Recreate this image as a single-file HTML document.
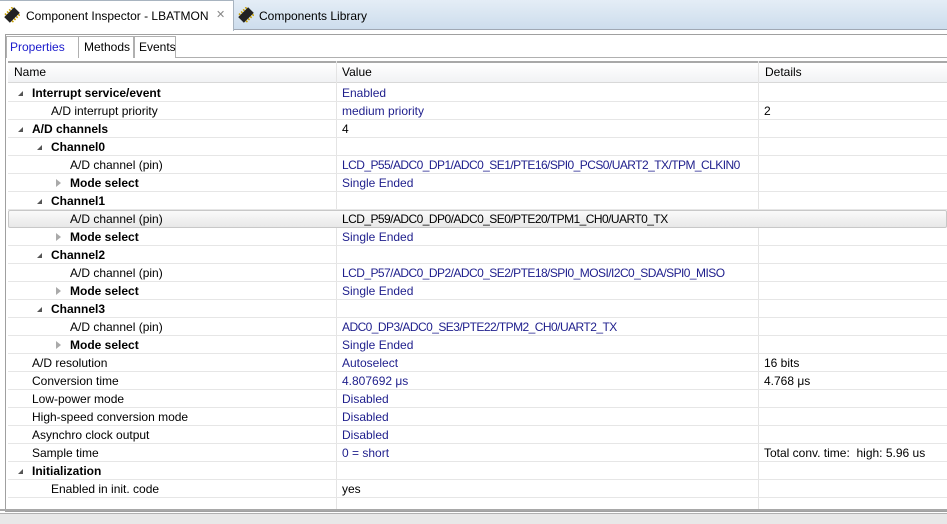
<!DOCTYPE html>
<html><head><meta charset="utf-8"><style>
*{margin:0;padding:0;box-sizing:border-box}
body{width:947px;height:524px;overflow:hidden;background:#fff;font-family:"Liberation Sans",Arial,sans-serif;font-size:12px;color:#000;position:relative}
.topbar{position:absolute;left:0;top:0;width:947px;height:30px;background:linear-gradient(#e4edf6,#cddded);border-bottom:1px solid #a0a8b4}
.tab1{position:absolute;left:0;top:0;width:234px;height:31px;background:#fff;border-right:1px solid #a8b4c0;border-top:1px solid #a8b4c0}
.t{position:absolute;white-space:nowrap}
.panel{position:absolute;left:5px;top:34px;width:942px;height:478px;border:1px solid #a0a0a0;border-right:none}
.itab{position:absolute;top:36px;height:22px;border:1px solid #b0b0b0;border-bottom:none;background:#fff}
.hdr{position:absolute;left:8px;top:61px;width:939px;height:22px;background:linear-gradient(#fff,#f1f2f4);border-top:2px solid #a8a8a8;border-bottom:1px solid #d8d8d8}
.row{position:absolute;left:8px;width:939px;height:18px;border-bottom:1px solid #e6e6e6}
.vl{position:absolute;top:61px;width:1px;height:448px;background:#e4e4e4}
.v{color:#1e1e8c}
.p{letter-spacing:-0.55px}
.b{font-weight:bold}
.tri{position:absolute;width:0;height:0;border-left:5px solid transparent;border-bottom:5px solid #555;top:7px}
.tro{position:absolute;width:0;height:0;border-top:4px solid transparent;border-bottom:4px solid transparent;border-left:5px solid #aaa;top:5px}
</style></head><body>
<div class="topbar"></div>
<div class="tab1"></div>
<svg style="position:absolute;left:4px;top:7px" width="16" height="16"><g transform="rotate(45 8 8)"><rect x="4" y="1" width="8" height="14" fill="#222"/><g stroke="#c8a000" stroke-width="1.5"><line x1="2" y1="3" x2="4" y2="3"/><line x1="2" y1="6" x2="4" y2="6"/><line x1="2" y1="9" x2="4" y2="9"/><line x1="2" y1="12" x2="4" y2="12"/><line x1="12" y1="3" x2="14" y2="3"/><line x1="12" y1="6" x2="14" y2="6"/><line x1="12" y1="9" x2="14" y2="9"/><line x1="12" y1="12" x2="14" y2="12"/></g></g></svg>
<div class="t" style="left:26px;top:9px">Component Inspector - LBATMON</div>
<div class="t" style="left:216px;top:8px;color:#888;font-size:11px">✕</div>
<svg style="position:absolute;left:238px;top:7px" width="16" height="16"><g transform="rotate(45 8 8)"><rect x="4" y="1" width="8" height="14" fill="#222"/><g stroke="#c8a000" stroke-width="1.5"><line x1="2" y1="3" x2="4" y2="3"/><line x1="2" y1="6" x2="4" y2="6"/><line x1="2" y1="9" x2="4" y2="9"/><line x1="2" y1="12" x2="4" y2="12"/><line x1="12" y1="3" x2="14" y2="3"/><line x1="12" y1="6" x2="14" y2="6"/><line x1="12" y1="9" x2="14" y2="9"/><line x1="12" y1="12" x2="14" y2="12"/></g></g></svg>
<div class="t" style="left:259px;top:9px">Components Library</div>
<div class="panel"></div>
<div style="position:absolute;left:0;top:513px;width:947px;height:11px;background:#e8e8e8;border-top:1px solid #b0b0b0"></div>
<div class="itab" style="left:6px;width:72px;border-right:none"></div>
<div class="itab" style="left:78px;width:56px"></div>
<div class="itab" style="left:134px;width:42px"></div>
<div style="position:absolute;left:176px;top:57px;width:771px;height:1px;background:#b0b0b0"></div>
<div class="t" style="left:10px;top:40px;color:#1a1acc">Properties</div>
<div class="t" style="left:84px;top:40px">Methods</div>
<div class="t" style="left:139px;top:40px">Events</div>
<div class="hdr"></div>
<div class="t" style="left:14px;top:65px">Name</div>
<div class="t" style="left:342px;top:65px">Value</div>
<div class="t" style="left:765px;top:65px">Details</div>
<div class="vl" style="left:336px"></div>
<div class="vl" style="left:758px"></div>
<div class="row" style="top:84px"><i class="tri" style="left:10px"></i><span class="t b" style="left:24px;top:2px">Interrupt service/event</span><span class="t v" style="left:334px;top:2px">Enabled</span></div>
<div class="row" style="top:102px"><span class="t" style="left:43px;top:2px">A/D interrupt priority</span><span class="t v" style="left:334px;top:2px">medium priority</span><span class="t" style="left:756px;top:2px">2</span></div>
<div class="row" style="top:120px"><i class="tri" style="left:10px"></i><span class="t b" style="left:24px;top:2px">A/D channels</span><span class="t" style="left:334px;top:2px">4</span></div>
<div class="row" style="top:138px"><i class="tri" style="left:29px"></i><span class="t b" style="left:43px;top:2px">Channel0</span></div>
<div class="row" style="top:156px"><span class="t" style="left:62px;top:2px">A/D channel (pin)</span><span class="t v p" style="left:334px;top:2px">LCD_P55/ADC0_DP1/ADC0_SE1/PTE16/SPI0_PCS0/UART2_TX/TPM_CLKIN0</span></div>
<div class="row" style="top:174px"><i class="tro" style="left:48px"></i><span class="t b" style="left:62px;top:2px">Mode select</span><span class="t v" style="left:334px;top:2px">Single Ended</span></div>
<div class="row" style="top:192px"><i class="tri" style="left:29px"></i><span class="t b" style="left:43px;top:2px">Channel1</span></div>
<div class="row" style="top:210px;background:linear-gradient(#fafafa,#e8e8e8);border:1px solid #c8c8c8;border-radius:2px"><span class="t" style="left:61px;top:1px">A/D channel (pin)</span><span class="t p" style="left:333px;top:1px">LCD_P59/ADC0_DP0/ADC0_SE0/PTE20/TPM1_CH0/UART0_TX</span></div>
<div class="row" style="top:228px"><i class="tro" style="left:48px"></i><span class="t b" style="left:62px;top:2px">Mode select</span><span class="t v" style="left:334px;top:2px">Single Ended</span></div>
<div class="row" style="top:246px"><i class="tri" style="left:29px"></i><span class="t b" style="left:43px;top:2px">Channel2</span></div>
<div class="row" style="top:264px"><span class="t" style="left:62px;top:2px">A/D channel (pin)</span><span class="t v p" style="left:334px;top:2px">LCD_P57/ADC0_DP2/ADC0_SE2/PTE18/SPI0_MOSI/I2C0_SDA/SPI0_MISO</span></div>
<div class="row" style="top:282px"><i class="tro" style="left:48px"></i><span class="t b" style="left:62px;top:2px">Mode select</span><span class="t v" style="left:334px;top:2px">Single Ended</span></div>
<div class="row" style="top:300px"><i class="tri" style="left:29px"></i><span class="t b" style="left:43px;top:2px">Channel3</span></div>
<div class="row" style="top:318px"><span class="t" style="left:62px;top:2px">A/D channel (pin)</span><span class="t v p" style="left:334px;top:2px">ADC0_DP3/ADC0_SE3/PTE22/TPM2_CH0/UART2_TX</span></div>
<div class="row" style="top:336px"><i class="tro" style="left:48px"></i><span class="t b" style="left:62px;top:2px">Mode select</span><span class="t v" style="left:334px;top:2px">Single Ended</span></div>
<div class="row" style="top:354px"><span class="t" style="left:24px;top:2px">A/D resolution</span><span class="t v" style="left:334px;top:2px">Autoselect</span><span class="t" style="left:756px;top:2px">16 bits</span></div>
<div class="row" style="top:372px"><span class="t" style="left:24px;top:2px">Conversion time</span><span class="t v" style="left:334px;top:2px">4.807692 μs</span><span class="t" style="left:756px;top:2px">4.768 μs</span></div>
<div class="row" style="top:390px"><span class="t" style="left:24px;top:2px">Low-power mode</span><span class="t v" style="left:334px;top:2px">Disabled</span></div>
<div class="row" style="top:408px"><span class="t" style="left:24px;top:2px">High-speed conversion mode</span><span class="t v" style="left:334px;top:2px">Disabled</span></div>
<div class="row" style="top:426px"><span class="t" style="left:24px;top:2px">Asynchro clock output</span><span class="t v" style="left:334px;top:2px">Disabled</span></div>
<div class="row" style="top:444px"><span class="t" style="left:24px;top:2px">Sample time</span><span class="t v" style="left:334px;top:2px">0 = short</span><span class="t" style="left:756px;top:2px">Total conv. time:&nbsp; high: 5.96 us</span></div>
<div class="row" style="top:462px"><i class="tri" style="left:10px"></i><span class="t b" style="left:24px;top:2px">Initialization</span></div>
<div class="row" style="top:480px"><span class="t" style="left:43px;top:2px">Enabled in init. code</span><span class="t" style="left:334px;top:2px">yes</span></div>
<div class="row" style="top:498px;border-bottom:none"></div>
<div style="position:absolute;left:0;top:509px;width:947px;height:2px;background:#a8a8a8"></div>
</body></html>
